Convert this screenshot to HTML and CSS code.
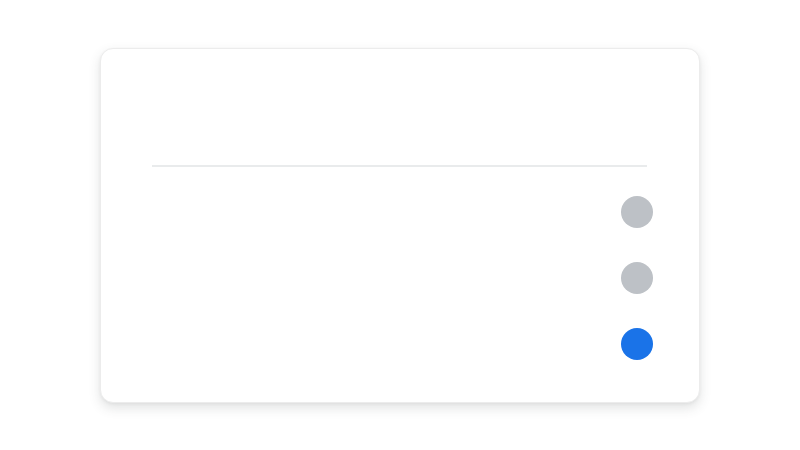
FILE: index.html
```html
<!DOCTYPE html>
<html>
<head>
<meta charset="utf-8">
<link rel="stylesheet" href="styles.css">
</head>
<body>
<div class="card">
  <div class="card-header"></div>
  <div class="divider"></div>
  <ul class="options">
    <li class="option"><span class="dot"></span></li>
    <li class="option"><span class="dot"></span></li>
    <li class="option"><span class="dot dot-active"></span></li>
  </ul>
</div>
</body>
</html>
```
FILE: styles.css
```css
html, body {
  margin: 0;
  padding: 0;
  background: #ffffff;
  font-family: Roboto, "Liberation Sans", sans-serif;
}
body {
  width: 800px;
  height: 450px;
  display: flex;
  align-items: center;
  justify-content: center;
}
.card {
  box-sizing: border-box;
  width: 600px;
  height: 355px;
  margin-top: 1px;
  background: #ffffff;
  border: 1px solid #ececec;
  border-radius: 13px;
  box-shadow: 0 5px 12px rgba(60, 70, 67, 0.15), 0 1px 3px rgba(60, 70, 67, 0.06);
  display: flex;
  flex-direction: column;
}
.card-header {
  height: 116px;
}
.divider {
  height: 1.5px;
  background: #e9ebec;
  margin: 0 52px 0 51px;
}
.options {
  list-style: none;
  margin: 0;
  padding: 29px 46px 0 0;
  display: flex;
  flex-direction: column;
  gap: 34px;
}
.option {
  display: flex;
  justify-content: flex-end;
}
.dot {
  width: 32px;
  height: 32px;
  border-radius: 50%;
  background: #bdc1c6;
}
.dot-active {
  background: #1a73e8;
}
```
